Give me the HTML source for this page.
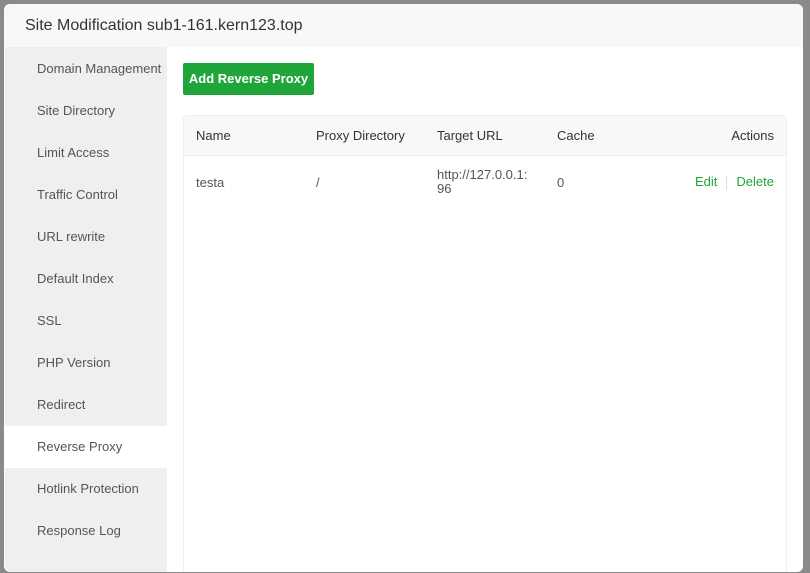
<!DOCTYPE html>
<html><head><style>
*{margin:0;padding:0;box-sizing:border-box}
body{width:810px;height:573px;background:#8a8a8a;font-family:"Liberation Sans",sans-serif;overflow:hidden;position:relative}
.dlg{position:absolute;left:4px;top:4px;width:799px;height:568px;background:#fff;border-radius:6px;overflow:hidden}
.hd{height:43px;background:#f8f8f8;font-size:16px;color:#333;padding-left:21px;line-height:43px}
.sb{position:absolute;left:1px;top:43px;width:162px;height:540px;background:#efefef;padding-top:1px}
.sb div{height:42px;line-height:42px;padding-left:32px;font-size:13px;color:#555}
.sb div.on{background:#fff}
.btn{position:absolute;left:179px;top:59px;width:131px;height:32px;background:#20a53a;color:#fff;font-size:13px;font-weight:bold;line-height:32px;text-align:center;border-radius:2px}
.tb{position:absolute;left:179px;top:111px;width:604px;height:470px;border:1px solid #eee;border-radius:4px}
.th{height:40px;background:#f8f8fa;border-bottom:1px solid #eee;position:relative;font-size:13px;color:#333}
.th span,.tr span{position:absolute;top:0;line-height:40px}
.tr{position:relative;height:56px;font-size:13px;color:#555}
a{color:#20a53a;text-decoration:none}
</style></head><body>
<div class="dlg">
<div class="hd">Site Modification sub1-161.kern123.top</div>
<div class="sb">
<div>Domain Management</div><div>Site Directory</div><div>Limit Access</div><div>Traffic Control</div><div>URL rewrite</div><div>Default Index</div><div>SSL</div><div>PHP Version</div><div>Redirect</div><div class="on">Reverse Proxy</div><div>Hotlink Protection</div><div>Response Log</div>
</div>
<div class="btn">Add Reverse Proxy</div>
<div class="tb">
<div class="th"><span style="left:12px">Name</span><span style="left:132px">Proxy Directory</span><span style="left:253px">Target URL</span><span style="left:373px">Cache</span><span style="right:12px">Actions</span></div>
<div class="tr"><span style="left:12px;top:7px">testa</span><span style="left:132px;top:7px">/</span><span style="left:253px;top:12px;line-height:14px">http://127.0.0.1:<br>96</span><span style="left:373px;top:7px">0</span><span style="right:12px;top:6px"><a>Edit</a><span style="position:static;display:inline-block;width:1px;height:14px;background:#ddd;margin:0 9px;vertical-align:middle"></span><a>Delete</a></span></div>
</div>
</div>
</body></html>
